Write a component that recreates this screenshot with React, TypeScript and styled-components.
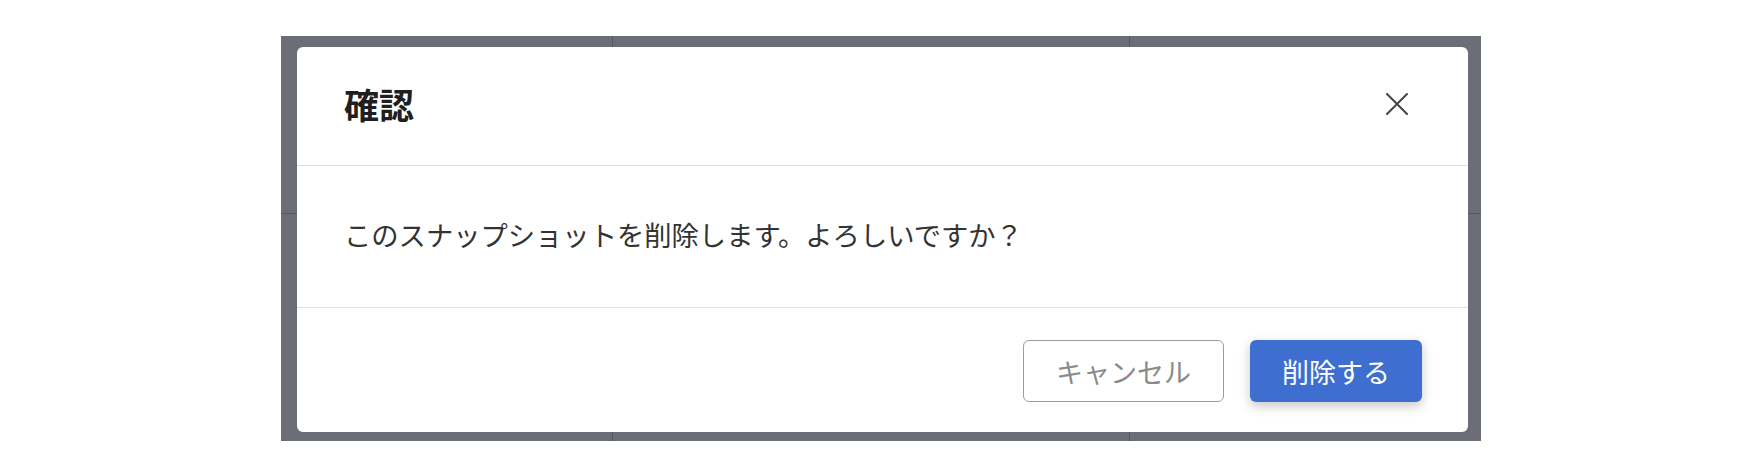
import React from "react";
import styled, { createGlobalStyle } from "styled-components";

const Global = createGlobalStyle`
  html, body { margin: 0; padding: 0; background: #ffffff; }
  body { font-family: "Noto Sans CJK JP", "Noto Sans", sans-serif; }
  * { box-sizing: border-box; }
`;

const Page = styled.div`
  width: 1744px;
  height: 470px;
  padding: 36px 0 0 281px;
`;

const Stage = styled.div`
  position: relative;
  width: 1200px;
  height: 405px;
`;

const BackTable = styled.div`
  display: grid;
  grid-template-columns: 332px 517px 351px;
  grid-template-rows: 178px 227px;
  width: 100%;
  height: 100%;
  background: #6b6e76;
`;

const Cell = styled.div<{ $right?: boolean; $bottom?: boolean }>`
  border-right: ${(p) => (p.$right ? "1px solid #56585f" : "none")};
  border-bottom: ${(p) => (p.$bottom ? "1px solid #56585f" : "none")};
`;

const Overlay = styled.div`
  position: absolute;
  inset: 0;
  padding: 11px 13px 9px 16px;
  display: flex;
`;

const Dialog = styled.div`
  flex: 1;
  background: #ffffff;
  border-radius: 6px;
  display: flex;
  flex-direction: column;
  overflow: hidden;
`;

const Header = styled.div`
  height: 119px;
  flex: none;
  display: flex;
  align-items: center;
  justify-content: space-between;
  padding: 0 59px 5px 47px;
  border-bottom: 1px solid #dedde4;
`;

const Title = styled.h2`
  margin: 0;
  font-size: 35px;
  font-weight: 700;
  color: #1f1f1f;
  line-height: 1;
`;

const CloseButton = styled.button`
  width: 24px;
  height: 24px;
  padding: 0;
  border: none;
  background: transparent;
  display: flex;
  align-items: center;
  justify-content: center;
  color: #444;
  cursor: pointer;
`;

const Body = styled.div`
  height: 142px;
  flex: none;
  display: flex;
  align-items: center;
  padding: 0 48px 4px 47px;
  border-bottom: 1px solid #e2e2e2;
`;

const Message = styled.p`
  margin: 0;
  font-size: 27.3px;
  line-height: 1.2;
  color: #333333;
`;

const Footer = styled.div`
  flex: 1;
  display: flex;
  align-items: center;
  justify-content: flex-end;
  gap: 26px;
  padding: 2px 46px 0 0;
`;

const Button = styled.button<{ $primary?: boolean }>`
  height: 62px;
  padding: 0 32px;
  border-radius: 6px;
  font-family: "Noto Sans CJK JP", "Noto Sans", sans-serif;
  font-size: 27px;
  line-height: 1;
  cursor: pointer;
  border: ${(p) => (p.$primary ? "none" : "1px solid #9c9c9c")};
  background: ${(p) => (p.$primary ? "#3e6ecf" : "#ffffff")};
  color: ${(p) => (p.$primary ? "#ffffff" : "#8a8a8a")};
  box-shadow: ${(p) => (p.$primary ? "0 4px 12px rgba(0,0,0,0.22)" : "none")};
`;

export default function App() {
  return (
    <>
      <Global />
      <Page>
        <Stage>
          <BackTable>
            <Cell $right $bottom />
            <Cell $right $bottom />
            <Cell $bottom />
            <Cell $right />
            <Cell $right />
            <Cell />
          </BackTable>
          <Overlay>
            <Dialog role="dialog" aria-labelledby="dlg-title">
              <Header>
                <Title id="dlg-title">確認</Title>
                <CloseButton aria-label="閉じる">
                  <svg width="22" height="22" viewBox="0 0 22 22">
                    <path d="M1 1 L21 21 M21 1 L1 21" stroke="currentColor" strokeWidth="2" strokeLinecap="round" />
                  </svg>
                </CloseButton>
              </Header>
              <Body>
                <Message>このスナップショットを削除します。よろしいですか？</Message>
              </Body>
              <Footer>
                <Button>キャンセル</Button>
                <Button $primary>削除する</Button>
              </Footer>
            </Dialog>
          </Overlay>
        </Stage>
      </Page>
    </>
  );
}
